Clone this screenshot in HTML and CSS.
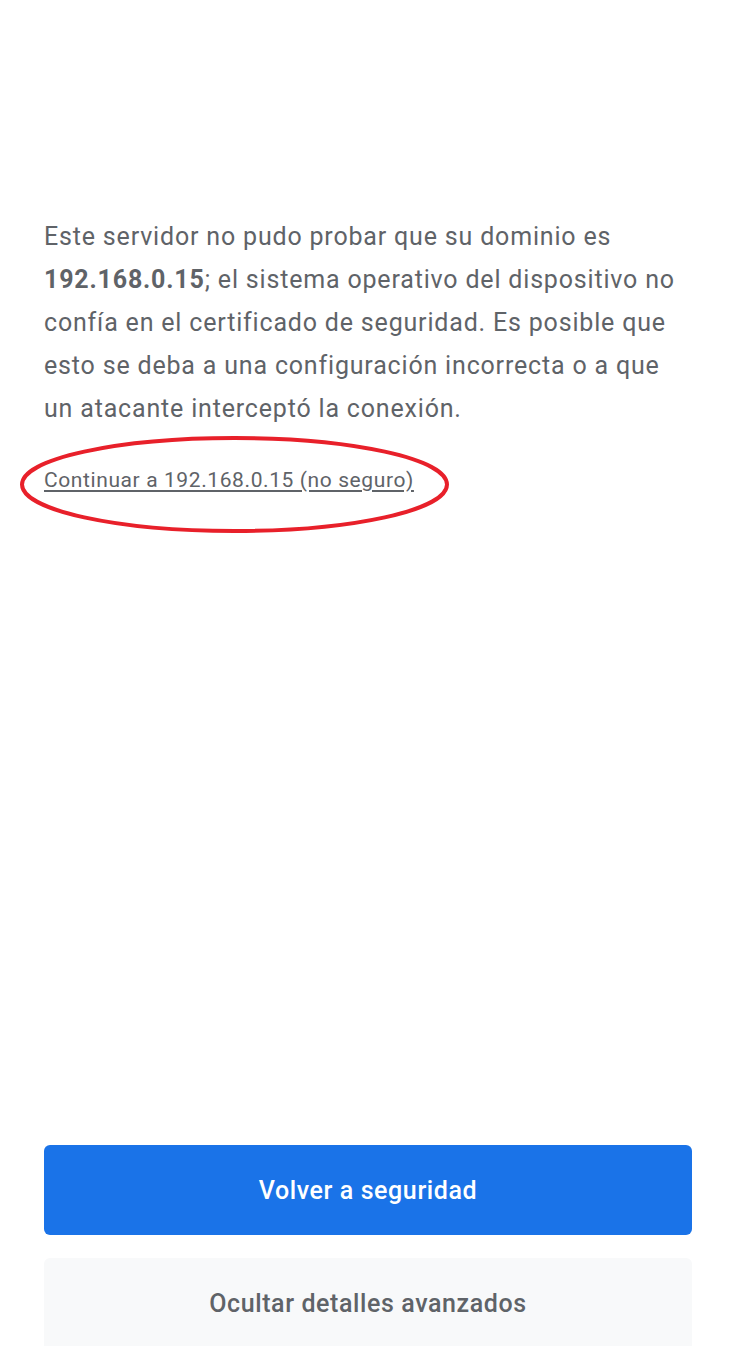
FILE: index.html
```html
<!DOCTYPE html>
<html lang="es">
<head>
<meta charset="utf-8">
<link rel="stylesheet" href="styles.css">
</head>
<body>
<main class="page">
  <section class="details">
    <p class="explain">Este servidor no pudo probar que su dominio es <strong>192.168.0.15</strong>; el sistema operativo del dispositivo no confía en el certificado de seguridad. Es posible que esto se deba a una configuración incorrecta o a que un atacante interceptó la conexión.</p>
    <div class="proceed-wrap">
      <a class="proceed" href="#">Continuar a 192.168.0.15 (no seguro)</a>
      <svg class="circle" width="434" height="102" viewBox="0 0 434 102" aria-hidden="true">
        <ellipse cx="216.5" cy="50.5" rx="212.5" ry="46.5" fill="none" stroke="#e8202a" stroke-width="4"/>
      </svg>
    </div>
  </section>
  <nav class="actions">
    <button class="btn primary">Volver a seguridad</button>
    <button class="btn secondary">Ocultar detalles avanzados</button>
  </nav>
</main>
</body>
</html>
```
FILE: styles.css
```css
html, body {
  margin: 0;
  padding: 0;
  background: #fff;
}
body {
  font-family: Roboto, "Noto Sans", sans-serif;
  color: #5f6368;
}
.page {
  display: flex;
  flex-direction: column;
  min-height: 1348px;
  padding: 0 55px 0 44px;
  box-sizing: border-box;
}
.details {
  padding-top: 215px;
}
.explain {
  margin: 0;
  font-size: 25px;
  line-height: 43px;
  letter-spacing: 0.82px;
}
.explain strong {
  font-weight: 700;
  color: #5f6368;
}
.proceed-wrap {
  position: relative;
  margin-top: 36px;
  height: 28px;
}
.proceed {
  font-size: 21px;
  line-height: 28px;
  letter-spacing: 0.6px;
  color: #5f6368;
  text-decoration: underline;
  text-underline-offset: 3px;
}
.circle {
  position: absolute;
  left: -26px;
  top: -32px;
}
.actions {
  margin-top: auto;
  display: flex;
  flex-direction: column;
  gap: 23px;
}
.btn {
  border: none;
  height: 90px;
  border-radius: 6px;
  font-family: Roboto, "Noto Sans", sans-serif;
  font-size: 25px;
  font-weight: 500;
  letter-spacing: 0.6px;
  width: 100%;
}
.primary {
  background: #1a73e8;
  color: #fff;
}
.secondary {
  background: #f8f9fa;
  color: #5f6368;
  border-radius: 6px 6px 0 0;
}
```
